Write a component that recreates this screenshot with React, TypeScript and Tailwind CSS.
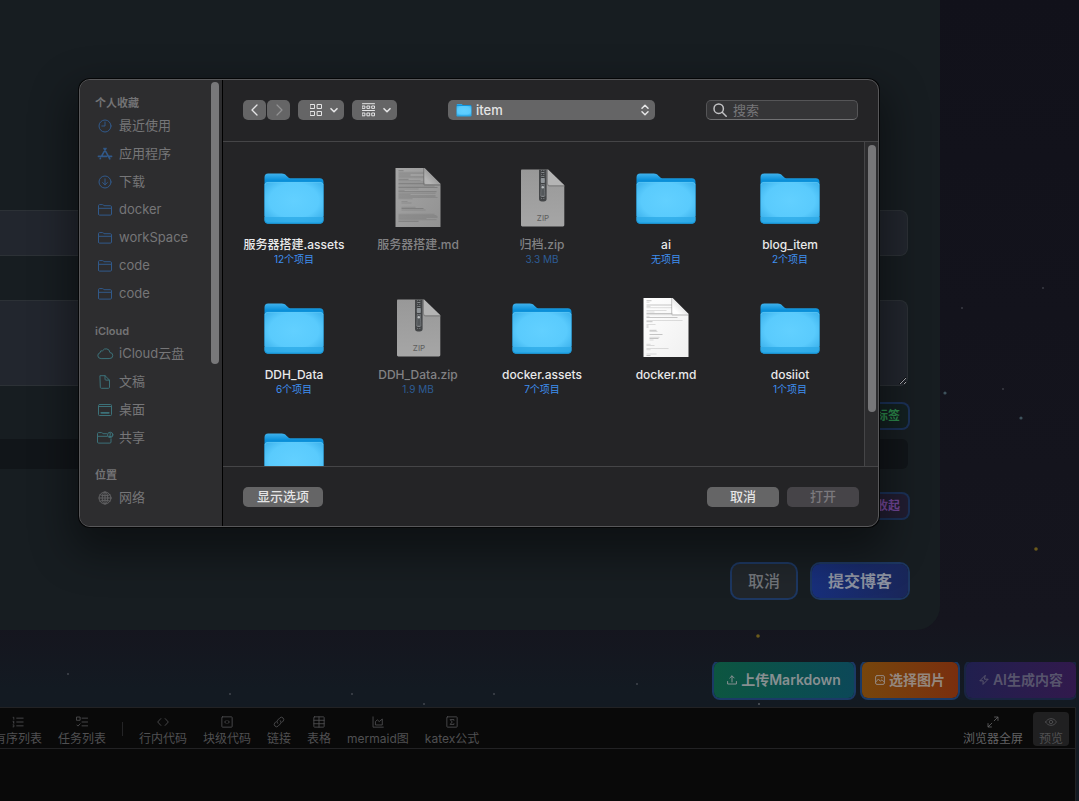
import React from "react";

type IconProps = { children: React.ReactNode; className?: string; box?: string; weight?: number };

function Icon({ children, className = "size-4", box = "0 0 16 16", weight = 1 }: IconProps) {
  return (
    <svg
      aria-hidden="true"
      viewBox={box}
      className={`shrink-0 ${className}`}
      fill="none"
      stroke="currentColor"
      strokeWidth={weight}
      strokeLinecap="round"
      strokeLinejoin="round"
    >
      {children}
    </svg>
  );
}

const outlineFolder = (
  <>
    <path d="M1.5 12V3.6c0-.6.4-1 1-1h2.8c.5 0 .8.2 1.1.5l.6.6h6.4c.7 0 1.1.4 1.1 1.1V12c0 .7-.4 1.1-1.1 1.1H2.6c-.7 0-1.1-.4-1.1-1.1Z" />
    <path d="M1.5 6.3h13" />
  </>
);

const sidebar = [
  {
    title: "个人收藏",
    tint: "text-[#31598a]",
    items: [
      { label: "最近使用", icon: <><circle cx="8" cy="8" r="6" /><path d="M8 4v4H4.8" /></> },
      {
        label: "应用程序",
        icon: (
          <g strokeWidth="1.6">
            <path d="M7 2.4 12.8 12.8M9 2.4 4.4 10.4M1.4 10.4h8.2M12 10.4h2.6M3.2 12.7l.2-.4" />
          </g>
        ),
      },
      { label: "下载", icon: <><circle cx="8" cy="8" r="6" /><path d="M8 4.8v6M5.7 8.6 8 10.9l2.3-2.3" /></> },
      { label: "docker", icon: outlineFolder },
      { label: "workSpace", icon: outlineFolder },
      { label: "code", icon: outlineFolder },
      { label: "code", icon: outlineFolder },
    ],
  },
  {
    title: "iCloud",
    tint: "text-[#3c7179]",
    items: [
      {
        label: "iCloud云盘",
        icon: <path d="M3.7 12.6a3 3 0 0 1-.6-5.9 2 2 0 0 1 2.5-1.9 3.9 3.9 0 0 1 7.3 1.7 3 3 0 0 1-.4 6.1Z" />,
      },
      { label: "文稿", icon: <path d="M3.3 1.7H8l4.5 4.4v7.2c0 .6-.4 1-1 1H4.3c-.6 0-1-.4-1-1ZM8 1.7v3.5c0 .6.3.9.9.9h3.6" /> },
      {
        label: "桌面",
        icon: (
          <>
            <rect x="1.5" y="2.5" width="13" height="11" rx="1" />
            <path d="M1.8 4.5h12.4" />
            <path d="M4.3 10.8h7.4" strokeWidth="1.8" />
          </>
        ),
      },
      {
        label: "共享",
        icon: (
          <>
            <path d="M14 8.8V12c0 .7-.4 1.1-1.1 1.1H1.6c-.7 0-1.1-.4-1.1-1.1V3.6c0-.6.4-1 1-1h2.8c.5 0 .8.2 1.1.5l.6.6h3.5M.5 6.3h9.6" />
            <circle cx="13.2" cy="4.9" r="2.7" />
            <path d="M13.2 3.8v.5M12.3 6.3h1.8" strokeWidth="1.4" />
          </>
        ),
      },
    ],
  },
  {
    title: "位置",
    tint: "text-[#616163]",
    items: [
      {
        label: "网络",
        icon: (
          <>
            <circle cx="8" cy="8" r="6" />
            <ellipse cx="8" cy="8" rx="2.8" ry="6" />
            <path d="M8 2v12M2 8h12M3 4.8c3 1.3 7 1.3 10 0M3 11.2c3-1.3 7-1.3 10 0" />
          </>
        ),
      },
    ],
  },
];

function FolderArt({ className = "size-16" }: { className?: string }) {
  return (
    <svg aria-hidden="true" viewBox="0 0 64 64" className={`shrink-0 ${className}`}>
      <defs>
        <linearGradient id="folderBack" x1="0" y1="0" x2="0" y2="1">
          <stop offset="0" stopColor="#3fb2ec" />
          <stop offset=".16" stopColor="#0a8fd9" />
          <stop offset="1" stopColor="#0a8fd9" />
        </linearGradient>
        <radialGradient id="folderFront" cx=".5" cy=".45" r=".7">
          <stop offset="0" stopColor="#62d0ff" />
          <stop offset=".6" stopColor="#5acbfd" />
          <stop offset="1" stopColor="#34abe8" />
        </radialGradient>
      </defs>
      <path d="M2.5 11.5c0-2.5 1.2-4 3.7-4h13.6c2 0 3.2.7 4.4 1.9l1.4 1.4c1 1 2 1.5 3.5 1.5h28.7c2.4 0 3.7 1.3 3.7 3.7V50h-59Z" fill="url(#folderBack)" />
      <path d="M2.5 19.4c0-2.2 1.2-3.4 3.4-3.4h52.2c2.2 0 3.4 1.2 3.4 3.4v34.4c0 2.4-1.2 3.6-3.6 3.6H6.1c-2.4 0-3.6-1.2-3.6-3.6Z" fill="url(#folderFront)" />
      <path d="M2.5 51h59v2.8c0 2.4-1.2 3.6-3.6 3.6H6.1c-2.4 0-3.6-1.2-3.6-3.6Z" fill="#2ba8e6" opacity=".75" />
      <path d="M3 54.5c.4 1.9 1.4 2.6 3.2 2.6h51.6c1.8 0 2.8-.7 3.2-2.6" fill="none" stroke="#1399de" strokeWidth="1" />
      <path d="M3 19c.3-1.8 1.3-2.6 3-2.6h52c1.7 0 2.7.8 3 2.6" fill="none" stroke="#68cdf8" strokeWidth=".5" />
    </svg>
  );
}

function PageArt({ dim }: { dim: boolean }) {
  const rows = dim
    ? [5, 30, 38, 12, 37, 34, 10, 22, 39, 38, 30, 36, 39, 20, 6, 38, 37, 12, 37, 39, 14, 0, 6, 10, 0, 0, 14, 22, 24, 0, 0, 36, 38, 39, 28, 38, 20]
    : [5, 3, 0, 26, 4, 28, 0, 20, 8, 26, 30, 3, 31, 0, 36, 6, 0, 9, 2, 2, 0, 7, 8, 0, 13, 0, 10, 9, 4, 0, 0, 4, 8, 0, 22, 4, 0, 0, 10, 4];
  return (
    <svg aria-hidden="true" viewBox="0 0 64 64" className="size-16 shrink-0">
      <defs>
        <linearGradient id={dim ? "sheetDim" : "sheet"} x1="0" y1="0" x2="1" y2="1">
          <stop offset="0" stopColor={dim ? "#a5a5a5" : "#ffffff"} />
          <stop offset="1" stopColor={dim ? "#929292" : "#f0f0f0"} />
        </linearGradient>
        <linearGradient id={dim ? "curlDim" : "curl"} x1=".2" y1=".8" x2=".7" y2=".3">
          <stop offset="0" stopColor={dim ? "#b4b4b4" : "#ffffff"} />
          <stop offset="1" stopColor={dim ? "#8e8e8e" : "#d9d9d9"} />
        </linearGradient>
      </defs>
      <path d="M9.5 2h29l16 16v43h-45Z" fill={dim ? "url(#sheetDim)" : "url(#sheet)"} />
      {rows.map((width, i) => {
        const y = 4.5 + i * 1.4;
        const limit = y < 19 ? 25 : 39;
        const inset = i > 20 && i < 29 ? 3 : 0;
        return width ? (
          <rect
            key={i}
            x={12.5 + inset}
            y={y}
            width={Math.min(width, limit)}
            height=".6"
            fill={dim ? "#626262" : "#8c8c8c"}
            opacity={i % 3 === 0 ? 0.8 : 0.45}
          />
        ) : null;
      })}
      <path d="M38.5 2v14.4c0 1.4.4 1.8 1.8 1.8h14.2v1.6H39.8c-1.9 0-2.8-1-2.8-2.9V2Z" fill="#000" opacity=".18" />
      <path d="M38.5 2v14c0 1.4.6 2 2 2h14Z" fill={dim ? "url(#curlDim)" : "url(#curl)"} />
    </svg>
  );
}

function ZipArt() {
  return (
    <svg aria-hidden="true" viewBox="0 0 64 64" className="size-16 shrink-0">
      <defs>
        <linearGradient id="zipSheet" x1="0" y1="0" x2="0" y2="1">
          <stop offset="0" stopColor="#989898" />
          <stop offset="1" stopColor="#a6a6a6" />
        </linearGradient>
      </defs>
      <path d="M12 3.5h26l16.3 16V59c0 .9-.5 1.4-1.4 1.4H12.4c-.9 0-1.4-.5-1.4-1.4V4.9c0-.9.4-1.4 1-1.4Z" fill="url(#zipSheet)" />
      <path d="M37.3 3.5v14.6c0 1.6.7 2.4 2.4 2.4h14.6v-1Z" fill="#7d7d7d" />
      <path d="M38 3.5v14c0 1.2.6 1.8 1.8 1.8h14.5Z" fill="#b4b4b4" />
      <path d="M29 3.5h7.6v29.2c0 1.8-1 2.8-2.8 2.8h-2c-1.8 0-2.8-1-2.8-2.8Z" fill="#444648" />
      <path d="M32.8 4v30" stroke="#83878a" strokeWidth="3" strokeDasharray="1 1" />
      <path d="M32.8 4v30" stroke="#303234" strokeWidth="1" strokeDasharray="2 1.4" />
      <rect x="30.8" y="12" width="4" height="5" rx="1" fill="#8f9498" />
      <path d="M31.2 18.5h3.2l.5 11.5h-4.2Z" fill="#54585b" stroke="#7d8285" strokeWidth=".6" />
      <circle cx="32.8" cy="21.3" r="1.2" fill="#b7bbbd" />
      <text x="33" y="55" textAnchor="middle" fontSize="8" fontFamily="Inter, sans-serif" fill="#5d5d5d">
        ZIP
      </text>
    </svg>
  );
}

type Kind = "folder" | "page" | "zip";
const files: { name: string; note?: string; kind: Kind; dim?: boolean }[] = [
  { name: "服务器搭建.assets", note: "12个项目", kind: "folder" },
  { name: "服务器搭建.md", kind: "page", dim: true },
  { name: "归档.zip", note: "3.3 MB", kind: "zip", dim: true },
  { name: "ai", note: "无项目", kind: "folder" },
  { name: "blog_item", note: "2个项目", kind: "folder" },
  { name: "DDH_Data", note: "6个项目", kind: "folder" },
  { name: "DDH_Data.zip", note: "1.9 MB", kind: "zip", dim: true },
  { name: "docker.assets", note: "7个项目", kind: "folder" },
  { name: "docker.md", kind: "page" },
  { name: "dosiiot", note: "1个项目", kind: "folder" },
  { name: "", kind: "folder" },
];

function FileTile({ name, note, kind, dim = false }: (typeof files)[number]) {
  return (
    <button type="button" disabled={dim} className="flex h-[130px] w-[124px] flex-col items-center">
      {kind === "folder" && <FolderArt />}
      {kind === "page" && <PageArt dim={dim} />}
      {kind === "zip" && <ZipArt />}
      <span className={`mt-[7px] text-xs leading-4 font-medium whitespace-nowrap ${dim ? "text-[#828284]" : "text-[#e9e9ea]"}`}>
        {name}
      </span>
      <span className={`text-[10px] leading-3 whitespace-nowrap ${dim ? "text-[#2d5d96]" : "text-[#3e8ff0]"}`}>
        {note}
      </span>
    </button>
  );
}

function FileDialog() {
  const control = "flex h-5 items-center justify-center rounded-[5px] bg-[#656566] text-[#e4e4e5]";
  return (
    <div
      role="dialog"
      aria-label="item"
      className="absolute top-[79px] left-[79px] flex h-[448px] w-[800px] overflow-hidden rounded-[11px] border border-[#58585a] bg-[#242426] shadow-[0_0_0_1px_#050607,0_18px_40px_8px_rgba(0,0,0,0.42)]"
    >
      <nav className="relative flex w-[143px] shrink-0 flex-col gap-3.5 border-r border-black bg-[#2d2d2f] pt-3.5">
        {sidebar.map((group) => (
          <section key={group.title}>
            <h2 className="pl-[15px] text-[11px] leading-[18px] font-semibold text-[#737375]">{group.title}</h2>
            <ul>
              {group.items.map((item, i) => (
                <li key={i}>
                  <a href="#" className="flex h-7 items-center gap-1.5 pl-[17px] text-[13px] text-[#767678]">
                    <Icon className={`size-4 overflow-visible ${group.tint}`}>{item.icon}</Icon>
                    {item.label}
                  </a>
                </li>
              ))}
            </ul>
          </section>
        ))}
        <div className="absolute top-0.5 right-[3px] h-[282px] w-2 rounded-full bg-[#78787a]" />
      </nav>

      <div className="flex min-w-0 flex-1 flex-col">
        <header className="flex h-[62px] items-center border-b border-[#454547] px-5 pb-0.5">
          <div className="flex gap-px">
            <button type="button" aria-label="后退" className={`${control} w-[23px]`}>
              <Icon className="size-3" box="0 0 12 12" weight={1.3}><path d="M8 1 3 6l5 5" /></Icon>
            </button>
            <button type="button" aria-label="前进" disabled className={`${control} w-[23px]`}>
              <Icon className="size-3 text-[#929294]" box="0 0 12 12" weight={1.2}><path d="m4 1 5 5-5 5" /></Icon>
            </button>
          </div>
          <button type="button" aria-label="图标显示" className={`${control} ml-2 w-[46px] gap-2 pl-1.5`}>
            <Icon className="size-3" box="0 0 12 12" weight={1}>
              <rect x=".5" y=".5" width="4" height="4" />
              <rect x="7.5" y=".5" width="4" height="4" />
              <rect x=".5" y="7.5" width="4" height="4" />
              <rect x="7.5" y="7.5" width="4" height="4" />
            </Icon>
            <Icon className="size-2" box="0 0 8 8" weight={1.6}><path d="m1 2.7 3 3 3-3" /></Icon>
          </button>
          <button type="button" aria-label="分组" className={`${control} ml-2 w-[45px] gap-2 pl-1`}>
            <Icon className="h-[14px] w-[13px]" box="0 0 13 14" weight={1}>
              <path d="M.5.7h12M.5 7.5h12" />
              <rect x=".5" y="3" width="2.4" height="2.4" />
              <rect x="5.3" y="3" width="2.4" height="2.4" />
              <rect x="10.1" y="3" width="2.4" height="2.4" />
              <rect x=".5" y="10" width="2.4" height="2.8" />
              <rect x="5.3" y="10" width="2.4" height="2.8" />
              <rect x="10.1" y="10" width="2.4" height="2.8" />
            </Icon>
            <Icon className="size-2" box="0 0 8 8" weight={1.6}><path d="m1 2.7 3 3 3-3" /></Icon>
          </button>
          <div className="relative ml-[51px] flex items-center text-[#e4e4e5]">
            <span className="absolute left-2 flex"><FolderArt className="size-4" /></span>
            <select aria-label="位置" className="h-5 w-[207px] appearance-none rounded-[5px] bg-[#656566] pl-7 text-[13px] leading-5 font-medium">
              <option>item</option>
            </select>
            <span className="absolute right-1.5 flex">
              <Icon className="h-3 w-2" box="0 0 8 12" weight={1.5}><path d="M1 4.2 4 1.2l3 3M1 7.8l3 3 3-3" /></Icon>
            </span>
          </div>
          <div className="ml-auto flex h-5 w-[152px] items-center gap-1.5 rounded-[5px] border border-[#555557] border-b-[#717173] bg-[#353537] pl-1.5">
            <Icon className="size-3.5 text-[#c2c2c4]" box="0 0 14 14" weight={1.5}>
              <circle cx="5.7" cy="5.7" r="4.7" /><path d="m9.2 9.2 4 4" />
            </Icon>
            <input type="search" aria-label="搜索" placeholder="搜索" className="w-28 bg-transparent text-[13px] leading-4 outline-none placeholder:text-[#77777a]" />
          </div>
        </header>

        <div className="flex min-h-0 flex-1">
          <div className="flex min-w-0 flex-1 flex-wrap content-start overflow-hidden pt-6 pl-[9px]">
            {files.map((file) => <FileTile key={file.name} {...file} />)}
          </div>
          <div className="w-[14px] shrink-0 border-l border-[#454547] bg-[#2c2c2e] pt-[3px] pl-[3px]">
            <div className="h-[267px] w-2 rounded-full bg-[#777779]" />
          </div>
        </div>

        <footer className="flex h-[60px] shrink-0 items-center gap-2 border-t border-[#454547] pr-[19px] pl-5 text-[13px] font-medium">
          <button type="button" className={`${control} mr-auto w-20`}>显示选项</button>
          <button type="button" className={`${control} w-[72px]`}>取消</button>
          <button type="button" disabled className="flex h-5 w-[72px] items-center justify-center rounded-[5px] bg-[#464448] text-[#7b797d]">
            打开
          </button>
        </footer>
      </div>
    </div>
  );
}

const tools = [
  { label: "有序列表", icon: <><path d="M5.5 2.5H13M5.5 7H13M5.5 11.5H13" /><path d="M1.3 1.5h.8v2.3M1.2 6.2h1v1l-1 1h1.2M1.2 10.3h1v2.4h-1" strokeWidth=".9" /></> },
  { label: "任务列表", icon: <><rect x="1" y="1.2" width="3.8" height="3.8" /><path d="M7 2.5h6.5M7 7h6.5M7 11.5h6.5M1 10.5l1.3 1.3 2.5-2.7" /></> },
  { label: "行内代码", icon: <path d="M4.5 3 .8 7l3.7 4M9.5 3l3.7 4-3.7 4" /> },
  { label: "块级代码", icon: <><rect x="1" y="1" width="12" height="12" rx=".8" /><path d="M5.8 5.4 4.2 7l1.6 1.6M8.2 5.4 9.8 7 8.2 8.6" /></> },
  { label: "链接", icon: <path d="M5.4 8.6a2.7 2.7 0 0 1 0-3.8l2.7-2.7a2.7 2.7 0 0 1 3.8 3.8l-1.5 1.5M8.6 5.4a2.7 2.7 0 0 1 0 3.8l-2.7 2.7a2.7 2.7 0 0 1-3.8-3.8l1.5-1.5" /> },
  { label: "表格", icon: <><rect x="1" y="1" width="12" height="12" rx=".8" /><path d="M1 5h12M1 9h12M7 1v12" /></> },
  { label: "mermaid图", icon: <path d="M1.2 1v12h12M4 10V6.5l2.2-2 2.3 2L12 3.5V10Z" /> },
  { label: "katex公式", icon: <><rect x="1" y="1" width="12" height="12" rx=".8" /><path d="M9.3 5V4.2H4.8L7.3 7 4.8 9.8h4.5V9" /></> },
];

const stars = [
  { x: 1043, y: 288, r: 1, c: "#3b3d45" },
  { x: 962, y: 308, r: 1, c: "#3b3d45" },
  { x: 1003, y: 389, r: 1, c: "#3b3d45" },
  { x: 945, y: 393, r: 1.6, c: "#3e525c" },
  { x: 1021, y: 418, r: 1.6, c: "#3e525c" },
  { x: 1036, y: 549, r: 1.8, c: "#6b5a1b" },
  { x: 758, y: 636, r: 1.8, c: "#6b5a1b" },
  { x: 759, y: 704, r: 1, c: "#55585f" },
  { x: 68, y: 674, r: 1, c: "#42464e" },
  { x: 230, y: 694, r: 1, c: "#42464e" },
  { x: 352, y: 694, r: 1, c: "#42464e" },
  { x: 424, y: 704, r: 1, c: "#42464e" },
  { x: 494, y: 694, r: 1, c: "#42464e" },
  { x: 637, y: 684, r: 1, c: "#42464e" },
];

export default function App() {
  const field = "block w-full resize-y rounded-r-lg border border-l-0 border-[#2c3136] bg-[#22262e] outline-none";
  const action = "flex h-9 items-center gap-1 rounded-md px-[13px] text-sm font-semibold whitespace-nowrap ring-2";
  const tool = "flex h-[34px] flex-col items-center gap-[3px] rounded-sm px-1.5 pt-1 whitespace-nowrap";
  return (
    <div className="relative flex min-h-screen flex-col overflow-hidden bg-linear-to-b from-[#11111a] via-[#15151e] via-78% to-[#131a22] to-86% font-['Inter','Noto_Sans_CJK_SC',sans-serif]">
      <svg aria-hidden="true" className="absolute inset-0 size-full">
        {stars.map((s) => <circle key={`${s.x}-${s.y}`} cx={s.x} cy={s.y} r={s.r} fill={s.c} />)}
      </svg>

      <form className="relative mr-[139px] flex flex-col items-end rounded-br-3xl bg-[#171d21] pt-[210px] pr-8 pb-8">
        <input aria-label="标题" className={`${field} h-[46px]`} />
        <textarea aria-label="摘要" className={`${field} mt-11 h-[86px]`} />
        <button type="button" className="mt-[18px] h-6 rounded-md bg-[#132021] px-2 text-xs font-bold text-[#2c8a4c] ring-2 ring-[#1b3157]">标签</button>
        <div className="mt-[11px] h-[30px] w-full rounded-r-md bg-[#111519]" />
        <button type="button" className="mt-[25px] h-6 rounded-md bg-[#211d31] px-2 text-xs font-bold text-[#734799] ring-2 ring-[#1b3157]">收起</button>
        <div className="mt-[46px] flex gap-4 text-base">
          <button type="button" className="h-[34px] rounded-lg bg-[#21262b] px-4 font-medium text-[#71757a] ring-2 ring-[#1d3761]">取消</button>
          <button type="submit" className="h-[34px] rounded-lg bg-linear-to-r from-[#182f7b] to-[#192659] px-4 font-semibold text-[#8b91a0] ring-2 ring-[#1d3761]">提交博客</button>
        </div>
      </form>

      <div className="relative mt-8 mr-[3px] flex justify-end gap-2 overflow-hidden pb-2">
        <button type="button" className={`${action} bg-linear-to-r from-[#0d5640] to-[#0c4858] text-[#878f91] ring-[#1b3a66]`}>
          <Icon className="size-2.5" box="0 0 10 10" weight={1}><path d="M5 7V1M2.8 3 5 .8 7.2 3M.6 6.5V9h8.8V6.5" /></Icon>
          上传Markdown
        </button>
        <button type="button" className={`${action} bg-linear-to-r from-[#76450c] to-[#792e0e] text-[#94877e] ring-[#1b3a66]`}>
          <Icon className="size-2.5" box="0 0 10 10" weight={1}><rect x=".6" y=".6" width="8.8" height="8.8" rx="1.4" /><path d="m.8 7 2.6-3 1.8 2.2L7 4.8 9.2 7M6.5 2.7h.6" /></Icon>
          选择图片
        </button>
        <button type="button" disabled className={`${action} bg-linear-to-r from-[#201f4e] to-[#31194c] text-[#57546c] ring-[#192542]`}>
          <Icon className="size-2.5" box="0 0 10 10" weight={1}><path d="M6 .6.8 5.8h3.4L4 9.4l5.2-5.2H5.8Z" /></Icon>
          AI生成内容
        </button>
      </div>

      <main className="relative mt-px mr-[3px] flex flex-1 flex-col border-t border-r border-[#222224] bg-[#090909] text-xs text-[#505052]">
        <div role="toolbar" className="flex h-[41px] items-center gap-1 border-b border-[#222224] pt-0.5 pr-1.5">
          <div className="-ml-3 flex items-center gap-1">
            {tools.map((item, i) => (
              <React.Fragment key={item.label}>
                {i === 2 && <span className="mx-1.5 h-3.5 w-px bg-[#242426]" />}
                <button type="button" className={tool}>
                  <Icon className="size-3" box="0 0 14 14">{item.icon}</Icon>
                  <span className="leading-4">{item.label}</span>
                </button>
              </React.Fragment>
            ))}
          </div>
          <button type="button" className={`${tool} ml-auto text-[#626264]`}>
            <Icon className="size-3" box="0 0 14 14"><path d="M8.8 1.2h4v4M12.6 1.4 8.4 5.6M5.2 12.8h-4v-4M1.4 12.6l4.2-4.2" /></Icon>
            <span className="leading-4">浏览器全屏</span>
          </button>
          <button type="button" className={`${tool} bg-[#202021]`}>
            <Icon className="size-3" box="0 0 14 14"><path d="M.7 7C3.5 1.7 10.5 1.7 13.3 7 10.5 12.3 3.5 12.3.7 7Z" /><circle cx="7" cy="7" r="2" /></Icon>
            <span className="leading-4">预览</span>
          </button>
        </div>
        <textarea aria-label="正文" className="flex-1 resize-none bg-transparent outline-none" />
      </main>

      <FileDialog />
    </div>
  );
}
